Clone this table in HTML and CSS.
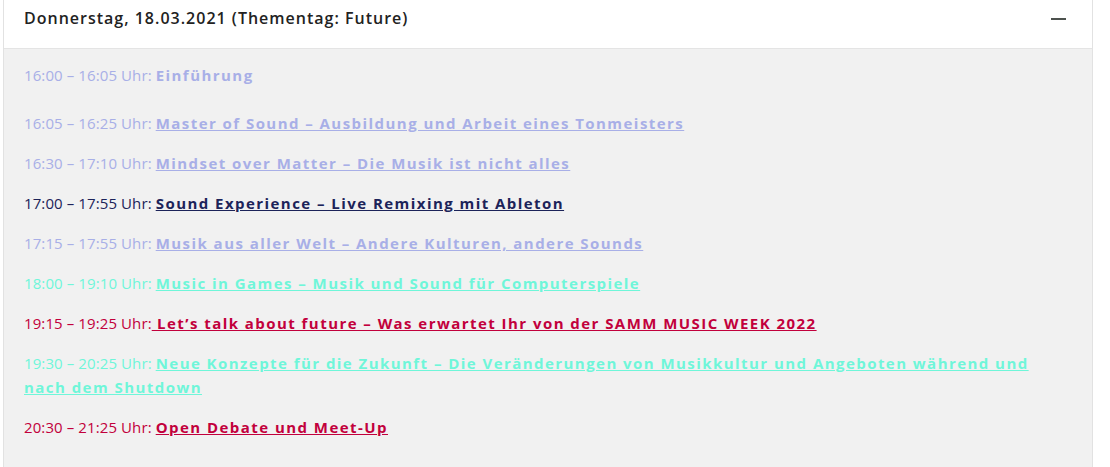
FILE: index.html
```html
<!DOCTYPE html>
<html lang="de">
<head>
<meta charset="utf-8">
<link rel="stylesheet" href="styles.css">
</head>
<body>
<div class="panel">
  <div class="panel-head">
    <span class="panel-title">Donnerstag, 18.03.2021 (Thementag: Future)</span>
    <span class="toggle"></span>
  </div>
  <div class="panel-body">
    <p class="item first lav">16:00 – 16:05 Uhr: <strong>Einführung</strong></p>
    <p class="item lav">16:05 – 16:25 Uhr: <a href="#">Master of Sound – Ausbildung und Arbeit eines Tonmeisters</a></p>
    <p class="item lav">16:30 – 17:10 Uhr: <a href="#">Mindset over Matter – Die Musik ist nicht alles</a></p>
    <p class="item navy">17:00 – 17:55 Uhr: <a href="#">Sound Experience – Live Remixing mit Ableton</a></p>
    <p class="item lav">17:15 – 17:55 Uhr: <a href="#">Musik aus aller Welt – Andere Kulturen, andere Sounds</a></p>
    <p class="item aqua">18:00 – 19:10 Uhr: <a href="#">Music in Games – Musik und Sound für Computerspiele</a></p>
    <p class="item red">19:15 – 19:25 Uhr:<a href="#"> Let’s talk about future – Was erwartet Ihr von der SAMM MUSIC WEEK 2022</a></p>
    <p class="item aqua">19:30 – 20:25 Uhr: <a href="#">Neue Konzepte für die Zukunft – Die Veränderungen von Musikkultur und Angeboten während und nach dem Shutdown</a></p>
    <p class="item red">20:30 – 21:25 Uhr: <a href="#">Open Debate und Meet-Up</a></p>
  </div>
</div>
</body>
</html>
```
FILE: styles.css
```css
html, body {
  margin: 0;
  padding: 0;
  background: #ffffff;
}
body {
  font-family: "Open Sans", "DejaVu Sans", sans-serif;
  font-size: 15px;
}
.panel {
  margin: -1px 0 0 3px;
  width: 1088px;
  border: 1px solid #e2e2e2;
  border-bottom: none;
}
.panel-head {
  height: 49px;
  background: #ffffff;
  border-bottom: 1px solid #e4e4e4;
  display: flex;
  align-items: center;
  justify-content: space-between;
  padding: 0 26px 0 20px;
  box-sizing: border-box;
}
.panel-title {
  font-weight: 600;
  color: #222222;
  font-size: 16px;
  letter-spacing: 1px;
  margin-top: -12px;
}
.toggle {
  width: 15px;
  height: 2px;
  background: #4d524e;
  margin-top: -10px;
}
.panel-body {
  background: #f1f1f1;
  padding: 14px 40px 30px 20px;
  height: 420px;
  box-sizing: border-box;
}
.item {
  margin: 0 0 16px;
  line-height: 24px;
  letter-spacing: 0.1px;
}
.item.first {
  margin-bottom: 24px;
}
.item a, .item strong {
  font-weight: 700;
  text-decoration: underline;
  letter-spacing: 1.45px;
}
.item strong { text-decoration: none; }
.lav, .lav a, .lav strong { color: #a8afe7; }
.navy, .navy a { color: #1c2359; }
.aqua, .aqua a { color: #6ff6d9; }
.red, .red a { color: #c2003c; }
```
